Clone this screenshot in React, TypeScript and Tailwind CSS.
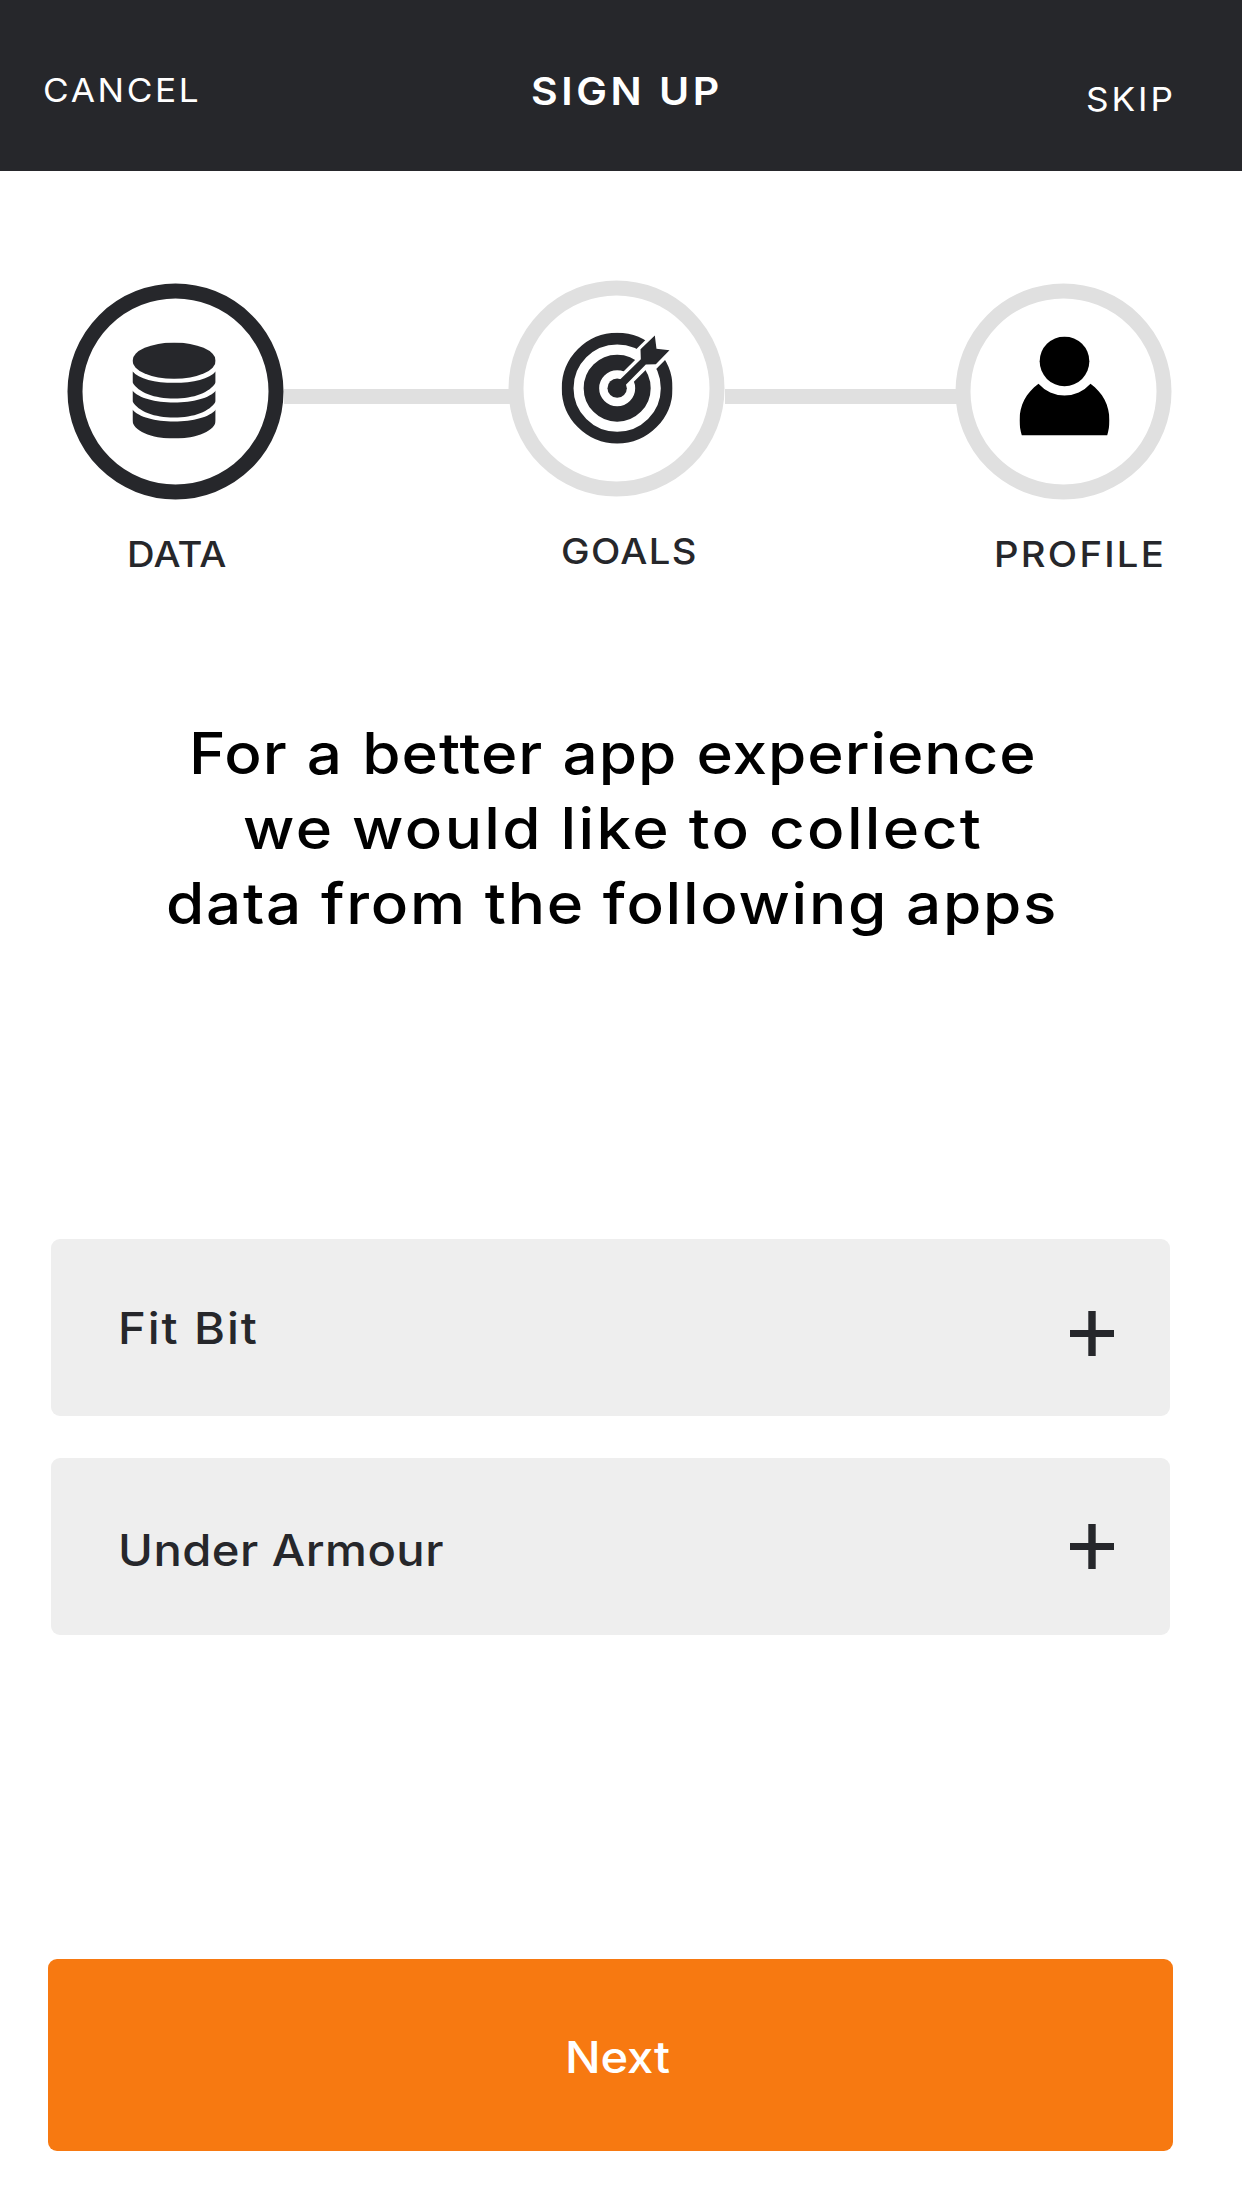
import React from "react";

function DatabaseIcon() {
  return (
    <svg className="-ml-[3px] -mt-[3px] h-[96px] w-[83.3px]" viewBox="247 216 250 288" fill="#26272b">
      <ellipse cx="372" cy="270.5" rx="125" ry="54.5" />
      <path d="M247 302C265 325 315 337 372 337S479 325 497 302V335C480 366 430 384 372 384S264 366 247 335Z" />
      <path d="M247 360C265 383 315 396 372 396S479 383 497 360V392C480 423 430 441 372 441S264 423 247 392Z" />
      <path d="M247 417C265 440 315 453 372 453S479 440 497 417V449C497 480 441 504 372 504S247 480 247 449Z" />
    </svg>
  );
}

function TargetIcon() {
  return (
    <svg className="h-[111.3px] w-[111px]" viewBox="213 188 333 334" fill="none">
      <circle cx="380" cy="355" r="148.7" stroke="#26272b" strokeWidth="35.5" />
      <circle cx="380" cy="355" r="77.3" stroke="#26272b" strokeWidth="46.5" />
      <path d="M380 355L456 279" stroke="#fff" strokeWidth="44" />
      <path d="M454 281L532 203" stroke="#fff" strokeWidth="84" />
      <circle cx="380" cy="355" r="29" fill="#26272b" />
      <path
        d="M388 330L451 268L450 238L493 197L498 237L537 241L496 283L466 284L404 347Z"
        fill="#26272b"
      />
    </svg>
  );
}

function PersonIcon() {
  return (
    <svg className="mb-[11.6px] ml-[2.7px] h-[99px] w-[90px]" viewBox="240 198 270 297" fill="#000">
      <circle cx="375" cy="272.5" r="74.5" />
      <path d="M297 340A104.4 104.4 0 0 0 453 340C490 367 510 405 510 450C510 466 507 482 503 495H247C243 482 240 466 240 450C240 405 260 367 297 340Z" />
    </svg>
  );
}

function PlusIcon() {
  return (
    <svg className="h-[45px] w-[44px]" viewBox="0 0 44 45" fill="#26272b">
      <path d="M18.3 0H25.7V19H44V26H25.7V45H18.3V26H0V19H18.3Z" />
    </svg>
  );
}

function Ring({ active, children }: { active?: boolean; children: React.ReactNode }) {
  return (
    <div
      className={
        "mb-[36px] flex size-[216px] translate-x-[0.5px] translate-y-[0.5px] items-center justify-center rounded-full border-[15px] bg-white " +
        (active ? "border-[#26272b]" : "border-[#e0e0e0]")
      }
    >
      {children}
    </div>
  );
}

export default function App() {
  return (
    <div className="flex h-[2208px] w-[1242px] flex-col overflow-hidden bg-white font-['Inter',sans-serif] whitespace-nowrap text-[#26272b]">
      <header className="flex h-[171px] shrink-0 items-start bg-[#26272b] text-white">
        <button className="mt-[70px] ml-[43.4px] w-[160px] origin-left scale-x-[1.08] text-left text-[32.6px] leading-[40px] tracking-[2.43px]">
          CANCEL
        </button>
        <h1 className="mt-[71px] ml-[327.9px] w-[200px] origin-left scale-x-[1.08] text-[38px] leading-[40px] font-semibold tracking-[3.28px]">
          SIGN UP
        </h1>
        <button className="mt-[79px] ml-[354.8px] origin-left scale-x-[1.08] text-left text-[32.6px] leading-[40px] tracking-[2.73px]">
          SKIP
        </button>
      </header>

      <nav className="mt-[109px] flex h-[300px] shrink-0 items-start pl-[67px] text-[35.4px] leading-[40px] font-medium">
        <div className="relative mt-[3px] w-[217px] shrink-0">
          <Ring active>
            <DatabaseIcon />
          </Ring>
          <div className="ml-[59.8px] origin-left scale-x-[1.08] tracking-[0.23px]">DATA</div>
        </div>
        <div className="mt-[109px] -mr-[4px] h-[15px] w-[228px] shrink-0 bg-[#e0e0e0]" />
        <div className="relative w-[217px] shrink-0">
          <Ring>
            <TargetIcon />
          </Ring>
          <div className="ml-[53.2px] origin-left scale-x-[1.08] tracking-[1.29px]">GOALS</div>
        </div>
        <div className="mt-[109px] -mr-[4px] h-[15px] w-[234px] shrink-0 bg-[#e0e0e0]" />
        <div className="relative mt-[3px] w-[217px] shrink-0">
          <Ring>
            <PersonIcon />
          </Ring>
          <div className="ml-[38.8px] origin-left scale-x-[1.08] tracking-[2.1px]">PROFILE</div>
        </div>
      </nav>

      <h2 className="mt-[136px] h-[225px] shrink-0 text-[57.4px] leading-[75px] font-medium text-black">
        <div className="ml-[189.2px] w-[800px] origin-left scale-x-[1.08] tracking-[0.9px] [word-spacing:1.6px]">
          For a be<span className="tracking-[-0.5px]">t</span>ter app experience
        </div>
        <div className="ml-[243px] w-[800px] origin-left scale-x-[1.08] tracking-[2.2px] [word-spacing:-1.2px]">
          we would like to collect
        </div>
        <div className="ml-[166.4px] w-[840px] origin-left scale-x-[1.08] tracking-[1.6px] [word-spacing:-0.2px]">
          data from the following apps
        </div>
      </h2>

      <section className="mt-[298px] ml-[51px] flex w-[1119px] shrink-0 flex-col gap-[42px] self-start text-[43.7px] font-medium">
        <div className="flex h-[177px] items-center justify-between rounded-[9px] bg-[#eee] pr-[56px] pl-[66.7px]">
          <span className="mt-[3px] origin-left scale-x-[1.08] leading-[60px] tracking-[1.8px]">Fit Bit</span>
          <span className="mt-[12px]">
            <PlusIcon />
          </span>
        </div>
        <div className="flex h-[177px] items-center justify-between rounded-[9px] bg-[#eee] pr-[56px] pl-[66.7px]">
          <span className="mt-[8px] origin-left scale-x-[1.08] leading-[60px] tracking-[0.43px]">Under Armour</span>
          <PlusIcon />
        </div>
      </section>

      <button className="mt-[324px] ml-[48px] flex h-[192px] w-[1125px] shrink-0 items-center rounded-[9px] bg-[#f77911] pt-[6px] pl-[517px] text-[43.7px] font-medium text-white">
        <span className="origin-left scale-x-[1.08] tracking-[-0.16px]">Next</span>
      </button>
    </div>
  );
}
